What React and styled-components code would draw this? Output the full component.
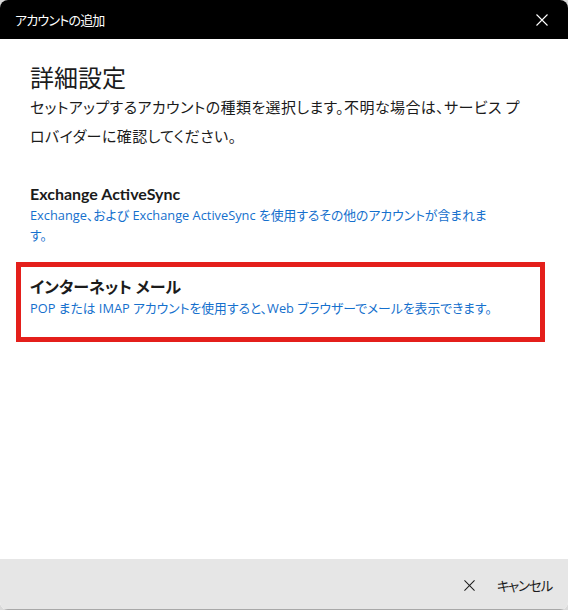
import styled, { createGlobalStyle } from "styled-components";

const GlobalStyle = createGlobalStyle`
	html, body {
		margin: 0;
		padding: 0;
		background: #d9d9d9;
	}
	* {
		box-sizing: border-box;
	}
`;

const Window = styled.div`
	width: 568px;
	height: 610px;
	display: flex;
	flex-direction: column;
	background: #fff;
	border-radius: 8px;
	overflow: hidden;
	font-family: "Segoe UI", Lato, "Noto Sans CJK JP", sans-serif;
	font-feature-settings: "palt";
	color: #1b1b1b;
`;

const TitleBar = styled.div`
	height: 39px;
	flex: none;
	background: #000;
	color: #fff;
	display: flex;
	align-items: center;
	justify-content: space-between;
	padding: 0 20px 0 15px;
`;

const TitleText = styled.span`
	font-size: 13px;
	letter-spacing: -0.8px;
	font-family: "Noto Sans CJK JP", sans-serif;
`;

const IconButton = styled.button`
	border: none;
	background: none;
	padding: 0;
	display: flex;
	color: inherit;
`;

const Content = styled.main`
	flex: 1;
	padding: 23px 23px 0 16px;
	display: flex;
	flex-direction: column;
`;

const Header = styled.header`
	padding: 0 14px;
`;

const Heading = styled.h1`
	margin: 0;
	font-size: 24px;
	line-height: 30px;
	font-weight: 400;
	font-family: "Noto Sans CJK JP", sans-serif;
`;

const Lead = styled.p`
	margin: 0;
	font-size: 15px;
	line-height: 29px;
	letter-spacing: 0.4px;
	font-family: "Noto Sans CJK JP", sans-serif;
`;

const Options = styled.div`
	margin-top: 19px;
	display: flex;
	flex-direction: column;
`;

const Option = styled.button`
	display: flex;
	flex-direction: column;
	align-items: flex-start;
	min-height: 80px;
	padding: 9px 9px 12px;
	border: 5px solid ${({ $selected }) => ($selected ? "#e41f1b" : "transparent")};
	background: none;
	text-align: left;
	font: inherit;
	color: inherit;
`;

const OptionTitle = styled.span`
	font-size: 16px;
	line-height: 22px;
	font-weight: 700;
`;

const OptionText = styled.span`
	max-width: 470px;
	font-family: "Open Sans", "Noto Sans CJK JP", sans-serif;
	font-size: 12.8px;
	line-height: 20px;
	color: #1570cd;
`;

const Footer = styled.footer`
	height: 51px;
	flex: none;
	background: #e6e6e6;
	border-bottom: 1px solid #a8a8a8;
	display: flex;
	align-items: center;
	justify-content: flex-end;
	padding: 0 16px 0 0;
`;

const CancelButton = styled.button`
	display: flex;
	align-items: center;
	gap: 22px;
	border: none;
	background: none;
	padding: 0;
	font-size: 13.5px;
	letter-spacing: -1.2px;
	font-family: "Noto Sans CJK JP", sans-serif;
	font-feature-settings: "palt";
	color: #1b1b1b;
	margin-top: 2px;
`;

const CloseIcon = ({ size }) => (
	<svg width={size} height={size} viewBox="0 0 12 12" fill="none">
		<path d="M0.5 0.5 L11.5 11.5 M11.5 0.5 L0.5 11.5" stroke="currentColor" strokeWidth="1.1" />
	</svg>
);

const options = [
	{
		title: "Exchange ActiveSync",
		text: "Exchange、および Exchange ActiveSync を使用するその他のアカウントが含まれます。",
	},
	{
		title: "インターネット メール",
		text: "POP または IMAP アカウントを使用すると、Web ブラウザーでメールを表示できます。",
		selected: true,
	},
];

const App = () => {
	return (
		<Window>
			<GlobalStyle />
			<TitleBar>
				<TitleText>アカウントの追加</TitleText>
				<IconButton aria-label="閉じる">
					<CloseIcon size={12} />
				</IconButton>
			</TitleBar>
			<Content>
				<Header>
					<Heading>詳細設定</Heading>
					<Lead>
						セットアップするアカウントの種類を選択します。不明な場合は、サービス プロバイダーに確認してください。
					</Lead>
				</Header>
				<Options>
					{options.map((o) => (
						<Option key={o.title} $selected={o.selected}>
							<OptionTitle>{o.title}</OptionTitle>
							<OptionText>{o.text}</OptionText>
						</Option>
					))}
				</Options>
			</Content>
			<Footer>
				<CancelButton>
					<CloseIcon size={11} />
					キャンセル
				</CancelButton>
			</Footer>
		</Window>
	);
};

export default App;
